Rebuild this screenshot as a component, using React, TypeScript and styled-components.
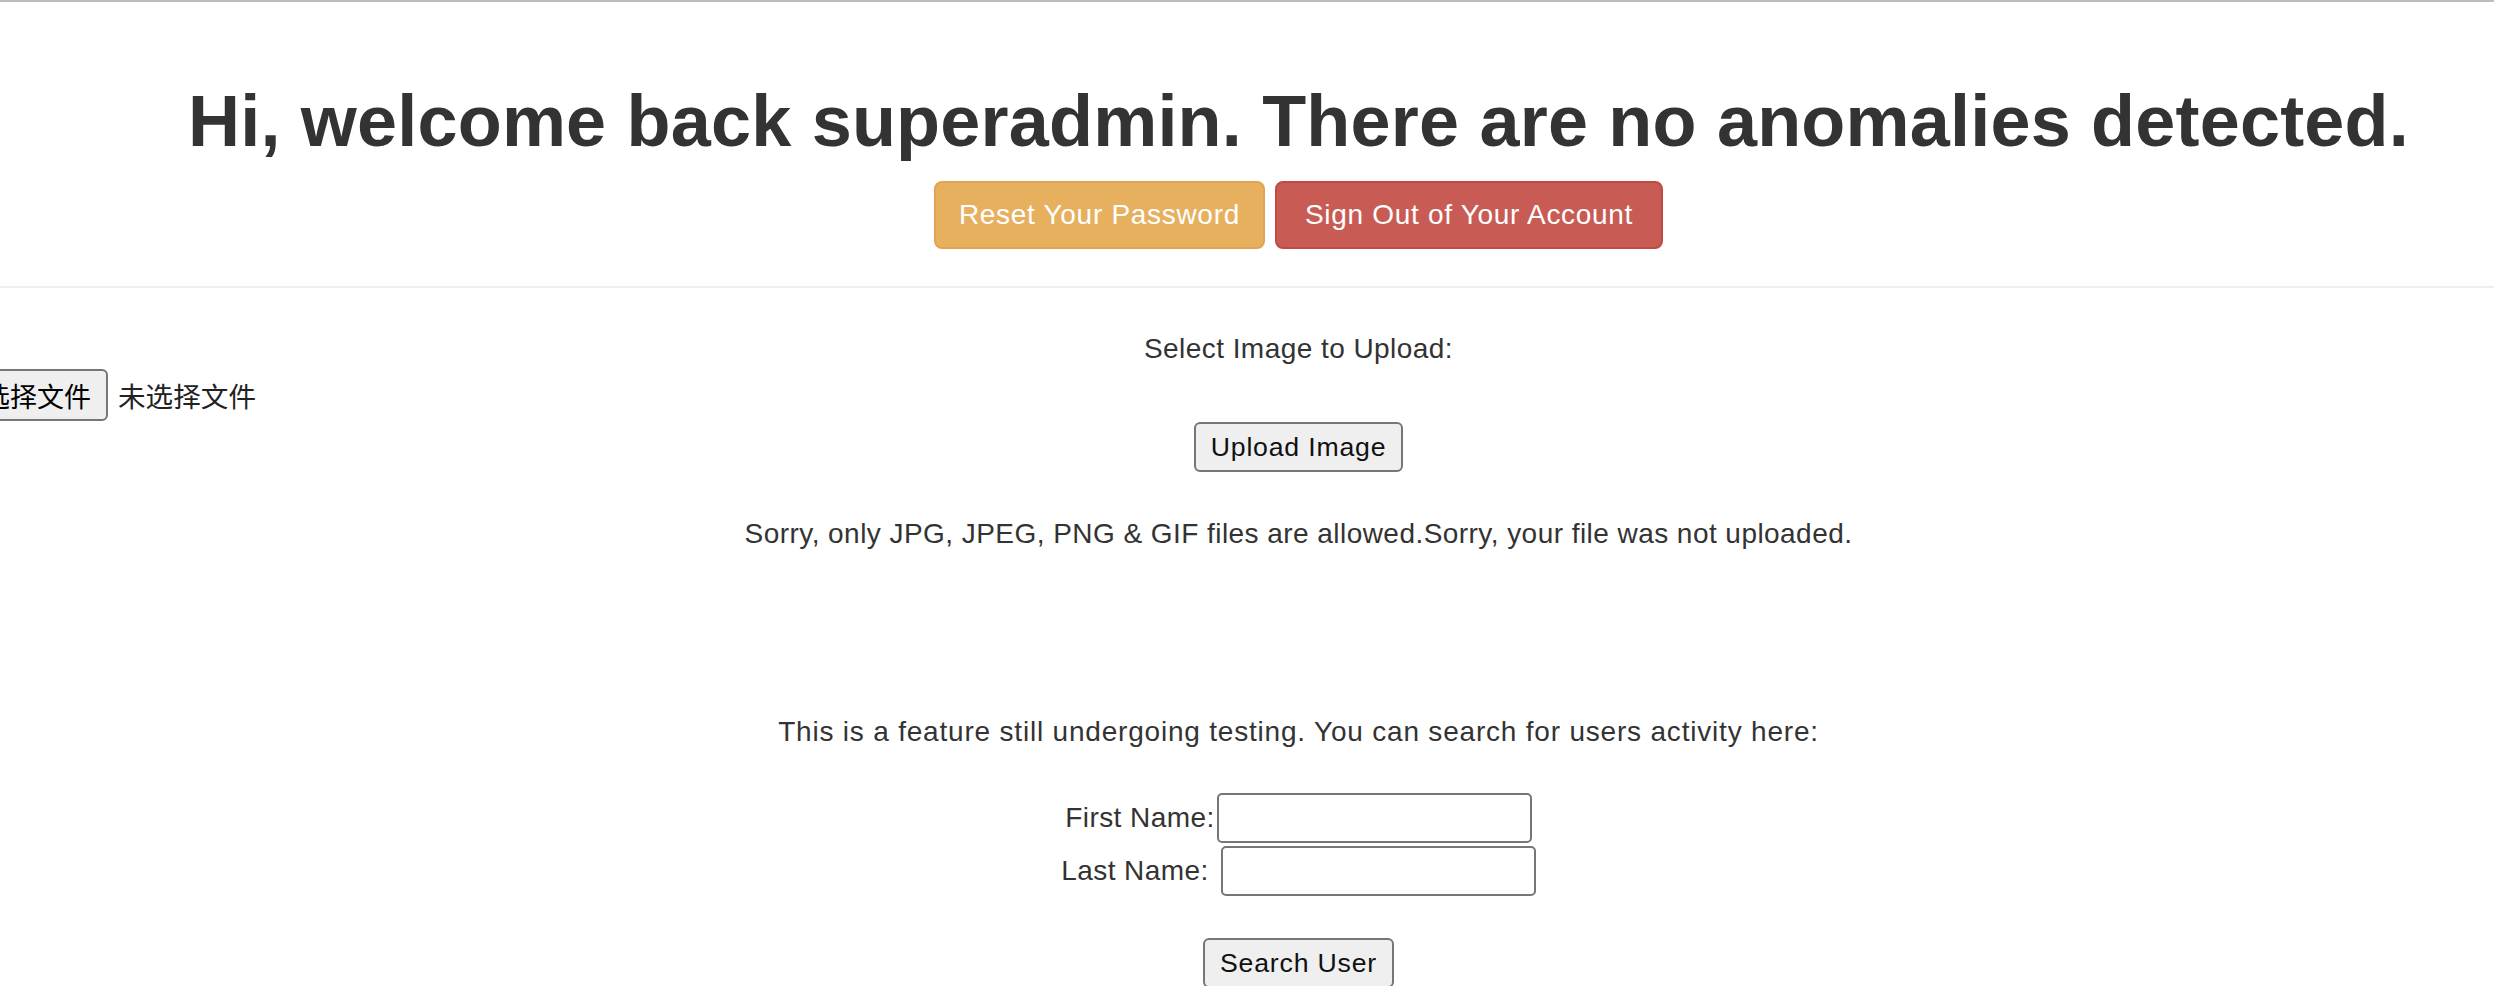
import React from "react";
import styled, { createGlobalStyle } from "styled-components";

const GlobalStyle = createGlobalStyle`
  html, body {
    margin: 0;
    padding: 0;
    overflow: hidden;
    background: #ffffff;
  }
  body {
    font-family: "Liberation Sans", Arial, sans-serif;
    color: #333333;
  }
  * { box-sizing: border-box; }
`;

const Page = styled.div`
  border-top: 2px solid #bdbdbd;
  width: 100%;
`;

const Container = styled.div`
  width: 2665px;
  margin-left: -34px;
`;

const Header = styled.header`
  padding-top: 80px;
  text-align: center;
`;

const Title = styled.h1`
  margin: 0;
  font-family: "Liberation Sans", Arial, sans-serif;
  font-size: 72px;
  font-weight: 700;
  line-height: 79px;
  letter-spacing: 0.2px;
  color: #333333;
`;

const ButtonRow = styled.div`
  display: flex;
  justify-content: center;
  gap: 10px;
  margin-top: 20px;
`;

const ActionButton = styled.button<{ $variant: "warning" | "danger" }>`
  height: 68px;
  padding: 0 ${(p) => (p.$variant === "warning" ? 23 : 28)}px;
  border: 2px solid
    ${(p) => (p.$variant === "warning" ? "#e2a452" : "#c14a44")};
  border-radius: 8px;
  background: ${(p) => (p.$variant === "warning" ? "#e7b05f" : "#c85c55")};
  color: #ffffff;
  font-family: "Liberation Sans", Arial, sans-serif;
  font-size: 28px;
  letter-spacing: 0.7px;
  cursor: pointer;
`;

const Divider = styled.hr`
  margin: 37px 0 0;
  border: 0;
  border-top: 2px solid #eeeeee;
`;

const Section = styled.section`
  display: flex;
  flex-direction: column;
`;

const CenterText = styled.p<{ $top: number; $spacing?: number }>`
  margin: ${(p) => p.$top}px 0 0;
  text-align: center;
  font-size: 28px;
  line-height: 40px;
  letter-spacing: ${(p) => p.$spacing ?? 0.45}px;
  color: #333333;
`;

const FileRow = styled.div`
  display: flex;
  align-items: center;
  height: 52px;
`;

const FileButton = styled.span`
  display: inline-flex;
  align-items: center;
  height: 52px;
  padding: 0 15px;
  border: 2px solid #767676;
  border-radius: 6px;
  background: #efefef;
  color: #000000;
  font-family: "Noto Sans CJK SC", sans-serif;
  font-size: 27px;
`;

const FileStatus = styled.span`
  margin-left: 10px;
  color: #222222;
  font-family: "Noto Sans CJK SC", sans-serif;
  font-size: 27.6px;
`;

const NativeButton = styled.button<{ $top: number }>`
  align-self: center;
  height: 50px;
  margin-top: ${(p) => p.$top}px;
  padding: 0 15px;
  border: 2px solid #767676;
  border-radius: 6px;
  background: #efefef;
  color: #111111;
  font-family: "Liberation Sans", Arial, sans-serif;
  font-size: 26.67px;
  letter-spacing: 0.8px;
  cursor: pointer;
`;

const FormRow = styled.div<{ $top: number }>`
  display: flex;
  justify-content: center;
  align-items: center;
  margin-top: ${(p) => p.$top}px;
`;

const FieldLabel = styled.label<{ $space: number }>`
  margin-right: ${(p) => p.$space}px;
  font-size: 28px;
  line-height: 40px;
  letter-spacing: 0.45px;
  color: #333333;
`;

const TextInput = styled.input`
  width: 315px;
  height: 50px;
  border: 2px solid #767676;
  border-radius: 5px;
  padding: 2px 4px;
  font-size: 26px;
  background: #ffffff;
`;

export default function App() {
  return (
    <>
      <GlobalStyle />
      <Page>
        <Container>
          <Header>
            <Title>
              Hi, welcome back superadmin. There are no anomalies detected.
            </Title>
            <ButtonRow>
              <ActionButton $variant="warning">Reset Your Password</ActionButton>
              <ActionButton $variant="danger">Sign Out of Your Account</ActionButton>
            </ButtonRow>
          </Header>
          <Divider />
          <Section>
            <CenterText $top={41}>Select Image to Upload:</CenterText>
            <FileRow>
              <FileButton>选择文件</FileButton>
              <FileStatus>未选择文件</FileStatus>
            </FileRow>
            <NativeButton $top={1}>Upload Image</NativeButton>
            <CenterText $top={42}>
              Sorry, only JPG, JPEG, PNG &amp; GIF files are allowed.Sorry, your file was not uploaded.
            </CenterText>
            <CenterText $top={158} $spacing={0.8}>
              This is a feature still undergoing testing. You can search for users activity here:
            </CenterText>
            <FormRow $top={41}>
              <FieldLabel $space={2} htmlFor="fname">First Name:</FieldLabel>
              <TextInput id="fname" type="text" />
            </FormRow>
            <FormRow $top={3}>
              <FieldLabel $space={12} htmlFor="lname">Last Name:</FieldLabel>
              <TextInput id="lname" type="text" />
            </FormRow>
            <NativeButton $top={42}>Search User</NativeButton>
          </Section>
        </Container>
      </Page>
    </>
  );
}
